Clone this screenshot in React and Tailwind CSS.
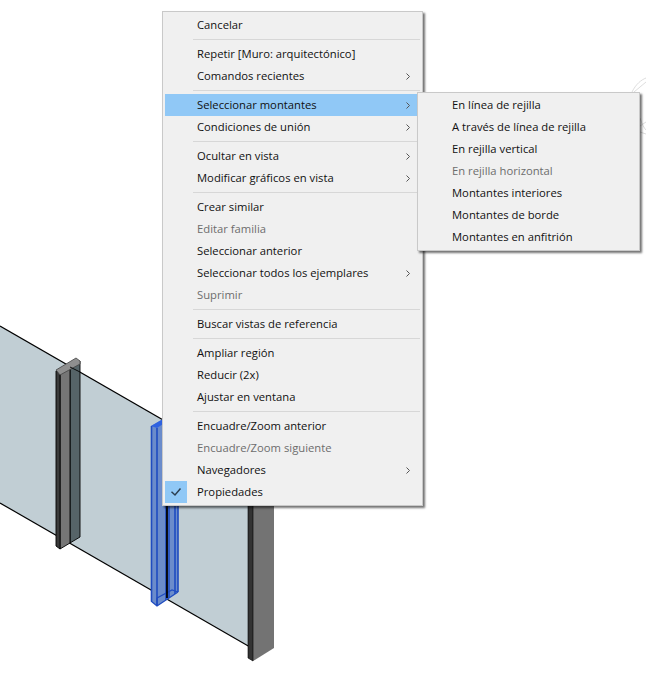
import React from "react";

const Chevron = ({ color = "#555" }) => (
  <svg width="4" height="7" viewBox="0 0 4 7" className="block">
    <path d="M0.5 0.5 L3.5 3.5 L0.5 6.5" fill="none" stroke={color} strokeWidth="1" />
  </svg>
);

const Sep = () => (
  <div className="py-[3px] pl-[28px]">
    <div className="h-px bg-[#d7d7d7]" />
  </div>
);

const Item = ({ label, sub, disabled, active, checked }) => (
  <div
    className={`relative flex h-[22px] items-center pl-[32px] pr-[10px] ${
      active ? "bg-[#90c8f6]" : ""
    } ${disabled ? "text-[#6d6d6d]" : "text-[#111111]"}`}
  >
    {checked && (
      <div className="absolute left-0 top-0 flex h-[22px] w-[22px] items-center justify-center bg-[#90c8f6]">
        <svg width="12" height="10" viewBox="0 0 12 10">
          <path d="M1.5 4.8 L5 8 L10.5 1.4" fill="none" stroke="#2c3e50" strokeWidth="1.5" />
        </svg>
      </div>
    )}
    <span className="flex-1 whitespace-nowrap">{label}</span>
    {sub && <Chevron />}
  </div>
);

const menuFont = "font-['Open_Sans','Noto_Sans',sans-serif] text-[11.25px] leading-[22px]";

export default function App() {
  return (
    <div className="relative h-[673px] w-[646px] overflow-hidden bg-white">
      <svg className="absolute inset-0" width="646" height="673" viewBox="0 0 646 673">
        {/* wall */}
        <polygon points="0,326 250,470 250,647 0,503" fill="#c1ced4" />
        <path d="M0 326 L250 470" stroke="#000" strokeWidth="1.2" />
        <path d="M0 503 L250 647" stroke="#000" strokeWidth="1.2" />

        {/* mullion left */}
        <polygon points="70,367 80,361 80,537 70,543" fill="#566468" stroke="#000" strokeWidth="0.9" />
        <polygon points="60,373 70,367 70,543 60,549" fill="#767676" stroke="#000" strokeWidth="0.9" />
        <polygon points="56,371 60,373 60,549 56,546" fill="#3a3a3a" stroke="#000" strokeWidth="0.9" />
        <polygon points="56,370 76,358 80,361 80,364 60,375" fill="#8f8f8f" stroke="#444" strokeWidth="0.8" />
        <path d="M70 367 L80 372" stroke="#000" strokeWidth="0.9" />

        {/* blue mullion */}
        <polygon points="151,426 163,419 178,430 178,592 157,606 151,601" fill="#6b8ccb" />
        <polygon points="151,426 163,419 163,424 157,428" fill="#2f62e0" />
        <path d="M151.5 426 V601 M157 428 V606 M166 424 V600 M169 430 V598 M175 430 V594 M178 430 V592" stroke="#1f4cc0" strokeWidth="1.6" fill="none" />
        <path d="M151 601 L157 606 L178 592 M157 598 L172 590 L178 592 M157 598 V606" stroke="#1f4cc0" strokeWidth="1.3" fill="none" />
        <path d="M167 500 V598" stroke="#000" strokeWidth="1.8" />

        {/* right pillar */}
        <polygon points="253,490 274,490 274,648 253,661" fill="#737373" />
        <polygon points="248,490 253,490 253,661 248,658" fill="#333333" stroke="#000" strokeWidth="0.6" />

        {/* faint background drawing */}
        <path d="M632 92 C636 84 641 80 646 78 M634 92 L646 82 M640 118 C642 124 644 128 646 130 M640 126 L646 122 M640 132 L646 134" stroke="#d4d4d4" strokeWidth="0.8" fill="none" />
      </svg>

      {/* main menu */}
      <div
        className={`absolute left-[162px] top-[11px] w-[261px] border border-[#c9c9c9] bg-[#f0f0f0] p-[2px] shadow-[2px_2px_2px_rgba(0,0,0,0.55)] ${menuFont}`}
      >
        <Item label="Cancelar" />
        <Sep />
        <Item label="Repetir [Muro: arquitectónico]" />
        <Item label="Comandos recientes" sub />
        <Sep />
        <Item label="Seleccionar montantes" sub active />
        <Item label="Condiciones de unión" sub />
        <Sep />
        <Item label="Ocultar en vista" sub />
        <Item label="Modificar gráficos en vista" sub />
        <Sep />
        <Item label="Crear similar" />
        <Item label="Editar familia" disabled />
        <Item label="Seleccionar anterior" />
        <Item label="Seleccionar todos los ejemplares" sub />
        <Item label="Suprimir" disabled />
        <Sep />
        <Item label="Buscar vistas de referencia" />
        <Sep />
        <Item label="Ampliar región" />
        <Item label="Reducir (2x)" />
        <Item label="Ajustar en ventana" />
        <Sep />
        <Item label="Encuadre/Zoom anterior" />
        <Item label="Encuadre/Zoom siguiente" disabled />
        <Item label="Navegadores" sub />
        <Item label="Propiedades" checked />
      </div>

      {/* submenu */}
      <div
        className={`absolute left-[417px] top-[92px] w-[223px] border border-[#c9c9c9] bg-[#f0f0f0] px-[2px] pb-[2px] pt-[1px] shadow-[2px_2px_2px_rgba(0,0,0,0.55)] ${menuFont}`}
      >
        <Item label="En línea de rejilla" />
        <Item label="A través de línea de rejilla" />
        <Item label="En rejilla vertical" />
        <Item label="En rejilla horizontal" disabled />
        <Item label="Montantes interiores" />
        <Item label="Montantes de borde" />
        <Item label="Montantes en anfitrión" />
      </div>
    </div>
  );
}
